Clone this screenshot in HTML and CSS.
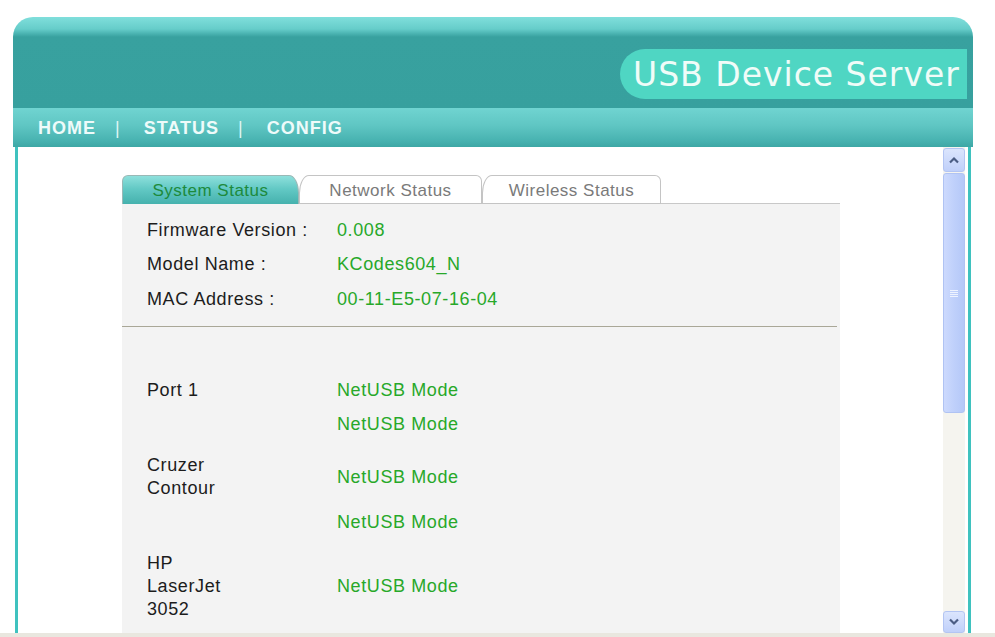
FILE: index.html
```html
<!DOCTYPE html>
<html>
<head>
<meta charset="utf-8">
<title>USB Device Server</title>
<link rel="stylesheet" href="styles.css">
</head>
<body>
<div class="page">
  <header class="banner">
    <div class="title-pill">USB Device Server</div>
  </header>
  <nav class="nav">
    <span class="nav-link">HOME</span><span class="sep">|</span><span class="nav-link">STATUS</span><span class="sep">|</span><span class="nav-link">CONFIG</span>
  </nav>
  <div class="frame">
    <div class="content">
      <div class="tabs">
        <div class="tab tab-system active">System Status</div>
        <div class="tab tab-network">Network Status</div>
        <div class="tab tab-wireless">Wireless Status</div>
        <div class="tab-fill"></div>
      </div>
      <div class="panel">
        <div class="info">
          <div class="row"><span class="label">Firmware Version :</span><span class="value">0.008</span></div>
          <div class="row"><span class="label">Model Name :</span><span class="value">KCodes604_N</span></div>
          <div class="row"><span class="label">MAC Address :</span><span class="value">00-11-E5-07-16-04</span></div>
        </div>
        <div class="divider"></div>
        <div class="ports">
          <div class="group">
            <div class="row"><span class="label port-label">Port 1</span><span class="value">NetUSB Mode</span></div>
            <div class="row"><span class="label port-label"></span><span class="value">NetUSB Mode</span></div>
          </div>
          <div class="group">
            <div class="row"><span class="label port-label">Cruzer Contour</span><span class="value">NetUSB Mode</span></div>
            <div class="row"><span class="label port-label"></span><span class="value">NetUSB Mode</span></div>
          </div>
          <div class="group">
            <div class="row"><span class="label port-label">HP LaserJet 3052</span><span class="value">NetUSB Mode</span></div>
          </div>
        </div>
      </div>
    </div>
    <div class="scrollbar">
      <div class="sb-btn sb-up">
        <svg width="12" height="8" viewBox="0 0 12 8"><path d="M2 6.5 L6 2.5 L10 6.5" fill="none" stroke="#4b5d84" stroke-width="2.2"/></svg>
      </div>
      <div class="sb-thumb">
        <div class="grip"></div>
      </div>
      <div class="sb-track"></div>
      <div class="sb-btn sb-down">
        <svg width="12" height="8" viewBox="0 0 12 8"><path d="M2 1.5 L6 5.5 L10 1.5" fill="none" stroke="#4b5d84" stroke-width="2.2"/></svg>
      </div>
    </div>
  </div>
</div>
<div class="statusbar"></div>
</body>
</html>
```

FILE: styles.css
```css
html, body {
  margin: 0;
  padding: 0;
  background: #ffffff;
  overflow: hidden;
}

body {
  width: 995px;
  height: 637px;
  font-family: "Liberation Sans", Arial, sans-serif;
}

.page {
  margin-left: 13px;
  width: 960px;
  padding-top: 17px;
}

.banner {
  height: 91px;
  border-radius: 20px 20px 0 0;
  background: linear-gradient(to bottom, #80dfdc 0px, #66cdca 12px, #48b1af 17px, #38a19f 20px, #37a09e 100%);
  display: flex;
  justify-content: flex-end;
  align-items: flex-start;
  box-sizing: border-box;
  padding-top: 32px;
  padding-right: 6px;
}

.title-pill {
  width: 347px;
  height: 50px;
  box-sizing: border-box;
  border-radius: 25px 0 0 25px;
  background: #4fd6c3;
  color: #f0fcf8;
  font-family: "DejaVu Sans", sans-serif;
  font-size: 33px;
  letter-spacing: 1px;
  line-height: 51px;
  padding-left: 13px;
  white-space: nowrap;
}

.nav {
  height: 39px;
  background: linear-gradient(to bottom, #70d4d1 0%, #5fc6c3 45%, #47b2b0 85%, #3ea7a5 100%);
  display: flex;
  align-items: center;
  padding-left: 25px;
  padding-top: 2px;
  box-sizing: border-box;
  color: #eefbfa;
  font-weight: bold;
  font-size: 18px;
  letter-spacing: 1px;
}

.sep {
  margin: 0 23px 0 19px;
  font-weight: normal;
  color: #dff5f4;
}

.frame {
  margin-left: 2px;
  width: 956px;
  height: 486px;
  box-sizing: border-box;
  border-left: 3px solid #3fc2bf;
  border-right: 3px solid #3fc2bf;
  display: flex;
  background: #ffffff;
}

.content {
  flex: 1;
  overflow: hidden;
  padding: 28px 0 0 104px;
}

.tabs {
  width: 718px;
  height: 29px;
  display: flex;
}

.tab {
  height: 29px;
  box-sizing: border-box;
  border: 1px solid #c4c4c4;
  border-radius: 10px 6px 0 0 / 18px 6px 0 0;
  background: #ffffff;
  color: #7a7a7a;
  font-size: 17px;
  letter-spacing: 0.5px;
  display: flex;
  align-items: center;
  justify-content: center;
  padding-top: 2px;
}

.tab-system { width: 177px; }
.tab-network { width: 183px; }
.tab-wireless { width: 179px; }

.tab.active {
  background: linear-gradient(to bottom, #8ee0dc 0%, #63c9c5 45%, #45b1ad 100%);
  border-color: #9ab8b6;
  border-bottom: none;
  border-radius: 6px 10px 0 0 / 6px 18px 0 0;
  color: #1d8a3c;
}

.tab-fill {
  flex: 1;
  border-bottom: 1px solid #c8c8c8;
}

.panel {
  width: 718px;
  height: 460px;
  background: #f3f3f3;
  color: #1c1c1c;
  font-size: 18px;
  letter-spacing: 0.6px;
}

.info {
  padding: 9px 0 0 25px;
}

.row {
  display: flex;
  align-items: center;
  padding: 5.75px 0;
  line-height: 23px;
}

.label {
  width: 190px;
  flex-shrink: 0;
}

.port-label {
  width: 92px;
  margin-right: 98px;
}

.value {
  color: #27a829;
}

.divider {
  margin-top: 9px;
  width: 715px;
  border-top: 1px solid #a9a797;
}

.ports {
  padding: 47px 0 0 25px;
}

.group + .group {
  margin-top: 7px;
}

.group .row {
  padding: 5.5px 0;
}

.scrollbar {
  width: 22px;
  margin-right: 3px;
  padding-top: 1px;
  display: flex;
  flex-direction: column;
  background: #f5f4ef;
}

.sb-btn {
  height: 24px;
  box-sizing: border-box;
  border: 1px solid #b3c5f3;
  border-radius: 3px;
  background: linear-gradient(to bottom, #dbe5fd, #c0d0fa);
  display: flex;
  align-items: center;
  justify-content: center;
}

.sb-down {
  height: 22px;
}

.sb-thumb {
  height: 240px;
  margin-top: 1px;
  box-sizing: border-box;
  border: 1px solid #b0c3f3;
  border-radius: 3px;
  background: linear-gradient(to right, #cddafd 0%, #bfd0fb 50%, #b5c8f8 100%);
  display: flex;
  align-items: center;
  justify-content: center;
}

.grip {
  width: 8px;
  height: 7px;
  background: repeating-linear-gradient(to bottom, #eef3ff 0px, #eef3ff 1px, transparent 1px, transparent 2px);
}

.sb-track {
  flex: 1;
}

.statusbar {
  height: 4px;
  background: #e9e7df;
}
```
